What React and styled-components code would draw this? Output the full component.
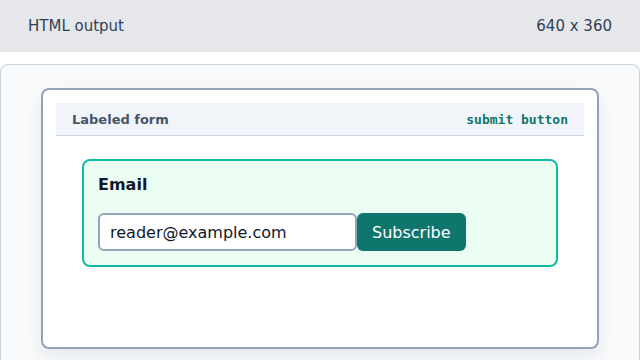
import React from 'react';
import styled, { createGlobalStyle } from 'styled-components';

const GlobalStyle = createGlobalStyle`
  html, body {
    margin: 0;
    padding: 0;
    background: #ffffff;
    font-family: "DejaVu Sans", "Liberation Sans", sans-serif;
  }
  * { box-sizing: border-box; }
`;

const Page = styled.div`
  width: 640px;
  height: 360px;
  overflow: hidden;
  background: #ffffff;
`;

const TopBar = styled.div`
  height: 52px;
  background: #e5e7eb;
  display: flex;
  align-items: center;
  justify-content: space-between;
  padding: 0 28px;
  font-size: 15px;
  color: #334155;
`;

const Stage = styled.div`
  margin-top: 12px;
  height: 320px;
  border: 1px solid #cbd5e1;
  border-bottom: none;
  border-radius: 8px 8px 0 0;
  background: #f8fafc;
  padding: 23px 40px 0 40px;
`;

const Card = styled.div`
  height: 261px;
  background: #ffffff;
  border: 2px solid #94a3b8;
  border-radius: 8px;
  box-shadow: 0 8px 20px rgba(15, 23, 42, 0.08);
  padding: 13px;
`;

const CardHeader = styled.div`
  height: 33px;
  background: #f1f5f9;
  border-bottom: 1px solid #cbd5e1;
  display: flex;
  align-items: center;
  justify-content: space-between;
  padding: 0 16px;
`;

const Title = styled.span`
  font-size: 13px;
  font-weight: bold;
  color: #475569;
`;

const Tag = styled.span`
  font-family: "DejaVu Sans Mono", "Liberation Mono", monospace;
  font-size: 13px;
  font-weight: bold;
  color: #0f766e;
`;

const FormBox = styled.form`
  width: 476px;
  margin: 23px auto 0;
  border: 2px solid #14b8a6;
  border-radius: 8px;
  background: #ebfcf3;
  padding: 14px;
`;

const Label = styled.label`
  display: block;
  font-size: 16px;
  font-weight: bold;
  color: #0f172a;
  line-height: 19px;
  margin-bottom: 19px;
`;

const Row = styled.div`
  display: flex;
  align-items: stretch;
`;

const Input = styled.input`
  width: 259px;
  height: 38px;
  border: 2px solid #94a3b8;
  border-radius: 6px;
  background: #ffffff;
  padding: 0 10px;
  font-family: "DejaVu Sans", "Liberation Sans", sans-serif;
  font-size: 16px;
  color: #0f172a;
  outline: none;
`;

const Button = styled.button`
  height: 38px;
  padding: 0 15px;
  border: none;
  border-radius: 6px;
  background: #0f766e;
  color: #ffffff;
  font-family: "DejaVu Sans", "Liberation Sans", sans-serif;
  font-size: 16px;
`;

export default function App() {
  return (
    <Page>
      <GlobalStyle />
      <TopBar>
        <span>HTML output</span>
        <span>640 x 360</span>
      </TopBar>
      <Stage>
        <Card>
          <CardHeader>
            <Title>Labeled form</Title>
            <Tag>submit button</Tag>
          </CardHeader>
          <FormBox onSubmit={(e) => e.preventDefault()}>
            <Label htmlFor="email">Email</Label>
            <Row>
              <Input id="email" type="email" defaultValue="reader@example.com" />
              <Button type="submit">Subscribe</Button>
            </Row>
          </FormBox>
        </Card>
      </Stage>
    </Page>
  );
}
